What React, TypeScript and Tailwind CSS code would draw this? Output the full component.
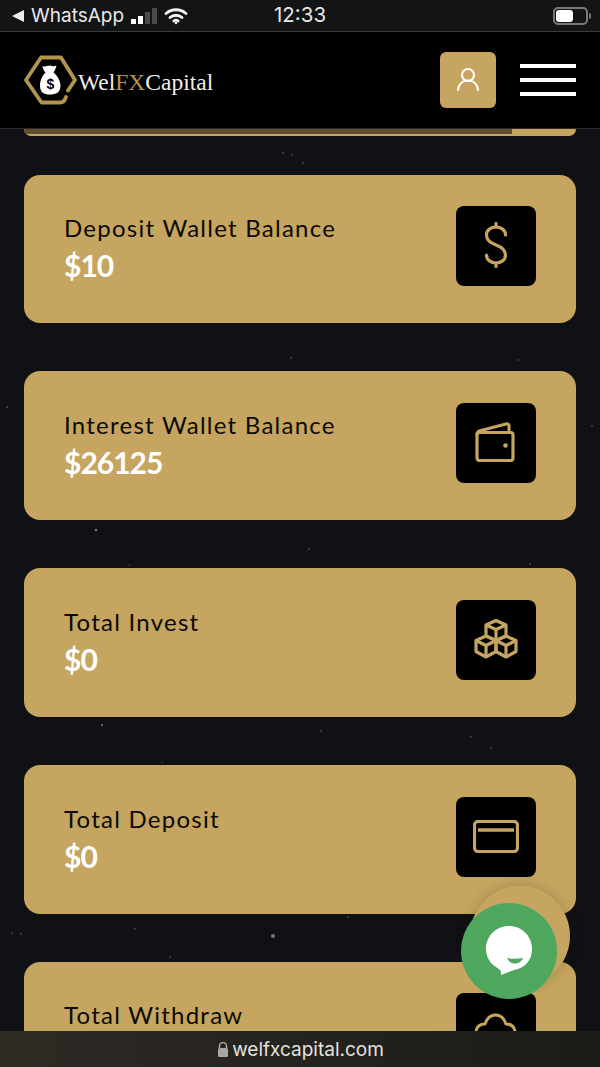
import React from 'react'

const GOLD = '#c5a55f'

const stars: [number, number, number][] = [
  [283, 153, 0.8], [292, 155, 0.7], [303, 163, 0.7], [291, 358, 0.7], [518, 360, 0.7], [7, 407, 0.8],
  [592, 426, 0.7], [96, 530, 1.3], [309, 549, 0.7], [129, 565, 0.6], [530, 564, 0.7], [102, 725, 1.1],
  [321, 731, 0.7], [471, 737, 0.7], [491, 748, 0.7], [162, 762, 0.6], [273, 936, 2], [12, 933, 0.7],
  [21, 934, 0.7], [135, 929, 0.7], [348, 917, 0.7], [170, 957, 0.7], [263, 85, 0.5], [70, 780, 0.5],
]

const DollarIcon = () => (
  <svg className="-mt-[2px]" width="24" height="46" viewBox="0 0 24 46" fill="none" stroke={GOLD} strokeWidth="3.200" strokeLinecap="round" strokeLinejoin="round">
    <path d="M12 1.500V5M12 41v3.500" />
    <path d="M21.500 13c0-5-4.500-8-9.500-8S2.500 8 2.500 13c0 5 4 8 9.500 10s9.500 5 9.500 10c0 5-4.500 8-9.500 8s-9.500-3-9.500-8" />
  </svg>
)

const WalletIcon = () => (
  <svg className="-mt-[3px] -ml-[2px]" width="40" height="40" viewBox="0 0 40 40" fill="none" stroke={GOLD} strokeWidth="3.200" strokeLinecap="round" strokeLinejoin="round">
    <rect x="2" y="10.500" width="36" height="28" rx="2.500" />
    <path d="M2 13c0-2.500 1-3.800 3-4.300L31 2c2-.4 3 .3 3 2v4" />
    <circle cx="30.500" cy="23.500" r="2.300" fill={GOLD} stroke="none" />
  </svg>
)

const BlocksIcon = () => (
  <svg className="-mt-[1px]" width="44" height="40" viewBox="0 0 44 40" fill="none" stroke={GOLD} strokeWidth="3.200" strokeLinejoin="round">
    <path d="M22 1.500l10 4.500v11l-10 4.500-10-4.500V6z" />
    <path d="M12 6l10 4.500L32 6M22 10.500v11" />
    <path d="M12 17l10 4.500v11L12 38 2 32.500v-11z" />
    <path d="M2 21.500l10 5 10-5M12 26.500V38" />
    <path d="M32 17l10 4.500v11L32 38l-10-5.500v-11z" />
    <path d="M22 21.500l10 5 10-5M32 26.500V38" />
  </svg>
)

const CardIcon = () => (
  <svg width="46" height="33" viewBox="0 0 46 33" fill="none" stroke={GOLD} strokeWidth="3.200" strokeLinejoin="round">
    <rect x="1.500" y="1.500" width="43" height="30" rx="3.500" />
    <line x1="5" y1="10" x2="41" y2="10" strokeWidth="3.600" />
  </svg>
)

const CloudIcon = () => (
  <svg width="46" height="40" viewBox="0 0 46 40" fill="none" stroke={GOLD} strokeWidth="3" strokeLinecap="round" strokeLinejoin="round">
    <path d="M3 18c1-5 4-7 9-7 2-6 5-9 10.500-9S31 5 33 11c5 0 8 2 9 7" />
  </svg>
)

const cards = [
  { title: 'Deposit Wallet Balance', value: '$10', icon: <DollarIcon /> },
  { title: 'Interest Wallet Balance', value: '$26125', icon: <WalletIcon /> },
  { title: 'Total Invest', value: '$0', icon: <BlocksIcon /> },
  { title: 'Total Deposit', value: '$0', icon: <CardIcon /> },
  { title: 'Total Withdraw', value: '', icon: <CloudIcon /> },
]

const App: React.FC = () => {
  return (
    <div className="relative flex h-[1067px] w-[600px] flex-col overflow-hidden bg-[#101114] font-['Lato',sans-serif]">
      {/* Status bar */}
      <div className="flex h-8 shrink-0 items-center border-b border-[#3a3b3d] bg-[#131416] pl-3 pr-[9px] font-['Inter',sans-serif] text-[#e8e8e8]">
        <div className="flex w-[262px] items-center">
          <svg width="12" height="12" viewBox="0 0 12 12" fill="#ececec"><path d="M0 6l12-6v12z" /></svg>
          <span className="ml-[7px] text-[19px] leading-none">WhatsApp</span>
          <div className="ml-[7px] flex items-end gap-[2px]">
            <span className="h-[5px] w-[5px] bg-white" />
            <span className="h-[8px] w-[5px] bg-white" />
            <span className="h-[12px] w-[5px] bg-[#4a4b4d]" />
            <span className="h-[16px] w-[5px] bg-[#4a4b4d]" />
          </div>
          <svg className="ml-[7px]" width="24" height="18" viewBox="0 0 24 18" fill="none" stroke="#f2f2f2" strokeWidth="2.800" strokeLinecap="round">
            <path d="M2 6.500c5.800-5 14.200-5 20 0" />
            <path d="M6 10.500c3.500-3 8.500-3 12 0" />
            <path d="M9.800 14c1.300-1 3.100-1 4.400 0" />
            <circle cx="12" cy="16" r="1.300" fill="#f2f2f2" stroke="none" />
          </svg>
        </div>
        <span className="text-[20.500px] leading-none">12:33</span>
        <div className="ml-auto flex items-center gap-[1px]">
          <div className="flex h-[18px] w-[35px] items-center rounded-[5px] border-2 border-[#77787a] p-[1px]">
            <div className="h-full w-[17px] rounded-[3px] bg-white" />
          </div>
          <div className="h-[6px] w-[2px] rounded-r bg-[#77787a]" />
        </div>
      </div>

      {/* Header */}
      <header className="flex h-[96px] shrink-0 items-center justify-between bg-black pl-6 pr-6">
        <div className="flex items-center">
          <svg width="54" height="50" viewBox="0 0 54 50" fill="none">
            <path d="M42 42c-1 3.500-3 5.500-6 5.500H17.500L2 25 17 2.500h20L51 25l-7 10.500" stroke="#b2944f" strokeWidth="3.800" strokeLinecap="round" strokeLinejoin="round" />
            <path d="M21.500 17.500c-2-2.500-3-4.500-3-6.500 2 .8 3 .5 4.500 0 2-.7 3.500-.7 5 0 1.200.5 2.500.3 4.500-.5-.5 2.500-1.500 4.500-3 7 3.500 3 7 8 7 13 0 7-4.500 9-10.500 9S16 37.500 16 30.500c0-5 2.500-10 5.500-13z" fill="#fff" />
            <text x="26.500" y="34" textAnchor="middle" fontFamily="Liberation Sans, sans-serif" fontWeight="700" fontSize="14" fill="#000">$</text>
          </svg>
          <span className="mt-[6px] font-['Liberation_Serif',serif] text-[23.500px] leading-none text-[#f1efe9]">
            Wel<span className="text-[#b2944f]">FX</span>Capital
          </span>
        </div>
        <div className="flex items-center gap-6">
          <button className="flex h-14 w-14 items-center justify-center rounded-[6px] bg-[#c5a55f]">
            <svg width="24" height="26" viewBox="0 0 24 26" fill="none" stroke="#fff" strokeWidth="2" strokeLinecap="round">
              <circle cx="12" cy="8" r="6" />
              <path d="M2 23c.500-6 4.500-9.500 10-9.500S21.500 17 22 23" />
            </svg>
          </button>
          <div className="flex w-14 flex-col gap-[10px]">
            <span className="h-1 bg-white" />
            <span className="h-1 bg-white" />
            <span className="h-1 bg-white" />
          </div>
        </div>
      </header>

      {/* Page content */}
      <main className="relative min-h-0 flex-1 overflow-hidden border-t border-[#2c2a24]">
        <svg className="absolute inset-x-0 top-[-129px]" width="600" height="1067" fill="#77787c">
          {stars.map(([x, y, r]) => (
            <circle key={`${x}-${y}`} cx={x} cy={y} r={r} />
          ))}
        </svg>
        <div className="relative flex flex-col gap-[48px] px-6">
          <div className="-mb-[9.500px] h-[7px] overflow-hidden rounded-b-[8px] bg-[#c5a55f]">
            <div className="h-[5px] w-[488px] bg-[#5f5030]" />
          </div>
          {cards.map((card) => (
            <section key={card.title} className="flex h-[148.750px] shrink-0 items-center justify-between rounded-[16px] bg-[#c5a55f] pl-10 pr-10">
              <div className="flex flex-col">
                <h3 className="text-[24px] leading-[30px] tracking-[1.250px] text-[#0b0a07]">{card.title}</h3>
                <p className="mt-[3px] h-[38px] text-[30px] font-bold leading-[38px] tracking-[-1px] text-white">{card.value}</p>
              </div>
              <div className="mb-[5px] flex h-20 w-20 items-center justify-center rounded-[8px] bg-black">{card.icon}</div>
            </section>
          ))}
        </div>
      </main>

      {/* Safari address bar */}
      <footer className="relative flex h-[36px] shrink-0 items-center justify-center bg-gradient-to-r from-[#2e2b25] to-[#1c1b18] pl-[2px] font-['Inter',sans-serif] text-[#e4e2dd]">
        <svg width="10" height="15" viewBox="0 0 10 15" fill="#a9a7a3">
          <path d="M1.500 6V4a3.500 3.500 0 0 1 7 0v2" fill="none" stroke="#a9a7a3" strokeWidth="1.500" />
          <rect x="0" y="6" width="10" height="9" rx="1.500" />
        </svg>
        <span className="ml-[4px] text-[19px] leading-none">welfxcapital.com</span>
      </footer>

      {/* Chat button */}
      <div className="absolute left-[470px] top-[886px] h-[100px] w-[100px] rounded-full bg-[#c5a55f] shadow-[0_0_14px_rgba(0,0,0,0.18)]" />
      <button className="absolute left-[461px] top-[903px] flex h-24 w-24 items-center justify-center rounded-full bg-[#4ea75d]">
        <svg width="46" height="50" viewBox="0 0 46 50" className="ml-[-1px]">
          <path d="M23 0C10 0 0 10 0 23c0 8 4 14 10 18 4.500 3 5.500 4 5 8l13-5c11-2 18-10 18-21C46 10 36 0 23 0z" fill="#fff" />
          <path d="M21 32c5 1 11 1 16 0-2 4-4.500 5.500-8 5.500S23 36 21 32z" fill="#4ea75d" />
        </svg>
      </button>
    </div>
  )
}

export default App
